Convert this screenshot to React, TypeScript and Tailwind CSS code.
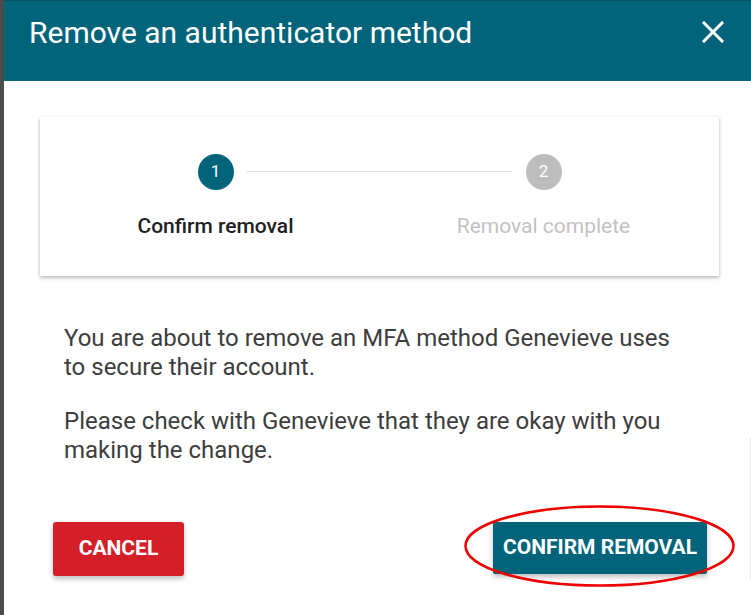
import React from "react";

function Step({ n, label, active }: { n: number; label: string; active: boolean }) {
  return (
    <div className="flex w-[328px] flex-col items-center">
      <div
        className={`flex h-[36px] w-[36px] items-center justify-center rounded-full text-[17px] text-white ${
          active ? "bg-[#01647a]" : "bg-[#bdbdbd]"
        }`}
      >
        {n}
      </div>
      <div
        className={`mt-[24px] text-[21px] leading-[25px] ${
          active ? "font-medium text-[#212121]" : "text-[#c2c2c2]"
        }`}
      >
        {label}
      </div>
    </div>
  );
}

export default function App() {
  return (
    <div className="flex h-[615px] w-[751px] overflow-hidden font-['Roboto',sans-serif]">
      <div className="w-[4px] bg-[#4b4b4b]" />
      <div className="relative flex flex-1 flex-col bg-white">
        <div className="flex h-[81px] items-start justify-between border-t border-[#0a4f5f] bg-[#01647a] pl-[25px] pr-[27px] pt-[14px]">
          <h1 className="text-[30px] leading-[36px] text-white">Remove an authenticator method</h1>
          <svg width="22" height="22" viewBox="0 0 22 22" className="mt-[6px]">
            <path d="M2 2 L20 20 M20 2 L2 20" stroke="white" strokeWidth="3" strokeLinecap="square" />
          </svg>
        </div>

        <div className="ml-[36px] mr-[32px] mt-[36px] h-[159px] bg-white pt-[37px] shadow-[0_2px_4px_rgba(0,0,0,0.2),0_1px_3px_rgba(0,0,0,0.12)]">
          <div className="relative flex justify-center">
            <div className="absolute left-[206px] top-[17px] h-px w-[266px] bg-[#e3e3e3]" />
            <Step n={1} label="Confirm removal" active />
            <Step n={2} label="Removal complete" active={false} />
          </div>
        </div>

        <div className="ml-[60px] mr-[60px] mt-[48px] text-[24px] leading-[29px] text-[#3d3d3d]">
          <p>You are about to remove an MFA method Genevieve uses to secure their account.</p>
          <p className="mt-[25px]">Please check with Genevieve that they are okay with you making the change.</p>
        </div>

        <div className="ml-[49px] mr-[44px] mt-[57px] flex items-start justify-between">
          <button className="h-[54px] w-[131px] rounded-[3px] bg-[#d51f28] text-[21px] font-bold text-white shadow-[0_3px_5px_rgba(0,0,0,0.25)]">
            CANCEL
          </button>
          <div className="relative">
            <button className="h-[52px] w-[214px] rounded-[2px] bg-[#01647a] text-[21px] font-bold text-white shadow-[0_3px_5px_rgba(0,0,0,0.25)]">
              CONFIRM REMOVAL
            </button>
            <svg
              width="273"
              height="84"
              viewBox="0 0 273 84"
              className="pointer-events-none absolute left-[-30px] top-[-18px]"
            >
              <ellipse cx="136.5" cy="42" rx="134" ry="39.5" fill="none" stroke="#ee0000" strokeWidth="2.5" />
            </svg>
          </div>
        </div>
        <div className="absolute right-0 top-[437px] h-[143px] w-px bg-[#e6e6e6]" />
      </div>
    </div>
  );
}
